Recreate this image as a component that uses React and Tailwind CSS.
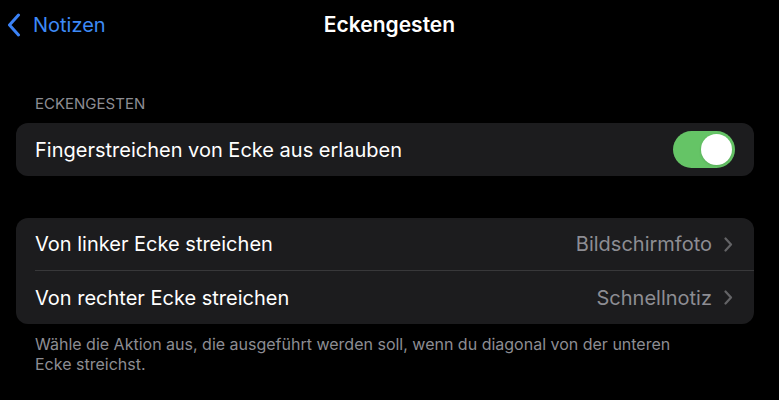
import React from 'react';

const font = { fontFamily: 'Inter, "Noto Sans", sans-serif' };

function Chevron() {
  return (
    <svg width="9" height="15" viewBox="0 0 9 15" fill="none" className="ml-3">
      <path d="M1.5 1.5L7 7.5L1.5 13.5" stroke="#636366" strokeWidth="2.2" strokeLinecap="round" strokeLinejoin="round" />
    </svg>
  );
}

function Toggle() {
  return (
    <div className="w-[62px] h-[37px] rounded-full bg-[#65c466] p-[3px] flex justify-end">
      <div className="w-[31px] h-[31px] rounded-full bg-white shadow" />
    </div>
  );
}

function LinkRow({ label, value, divider }) {
  return (
    <div className="pl-[19px]">
      <div className={`h-[53px] flex items-center pr-[21px] ${divider ? 'border-b border-[#38383a]' : ''}`}>
        <span className="flex-1 text-[20px] text-white">{label}</span>
        <span className="text-[20px] text-[#8d8d93]">{value}</span>
        <Chevron />
      </div>
    </div>
  );
}

export default function App() {
  return (
    <div className="w-[779px] h-[400px] bg-black overflow-hidden" style={font}>
      {/* nav bar */}
      <div className="relative h-[50px] flex items-center justify-center">
        <div className="absolute left-[7px] top-[13px] flex items-center">
          <svg width="14" height="24" viewBox="0 0 14 24" fill="none">
            <path d="M11.5 2L2.5 12L11.5 22" stroke="#3b82f6" strokeWidth="3" strokeLinecap="round" strokeLinejoin="round" />
          </svg>
          <span className="ml-[12px] text-[20px] text-[#3d8af7] leading-none">Notizen</span>
        </div>
        <span className="text-[21px] font-semibold text-white">Eckengesten</span>
      </div>

      <div className="pl-[16px] pr-[25px]">
        <div className="mt-[45px] pl-[19px] text-[15px] leading-[18px] text-[#8d8d93]">ECKENGESTEN</div>
        <div className="mt-[10px] h-[53px] rounded-[12px] bg-[#1c1c1e] flex items-center pl-[19px] pr-[19px]">
          <span className="flex-1 text-[20px] text-white">Fingerstreichen von Ecke aus erlauben</span>
          <Toggle />
        </div>

        <div className="mt-[42px] rounded-[12px] bg-[#1c1c1e]">
          <LinkRow label="Von linker Ecke streichen" value="Bildschirmfoto" divider />
          <LinkRow label="Von rechter Ecke streichen" value="Schnellnotiz" />
        </div>

        <p className="mt-[10px] pl-[19px] w-[690px] text-[16px] leading-[20px] text-[#8d8d93]">
          Wähle die Aktion aus, die ausgeführt werden soll, wenn du diagonal von der unteren Ecke streichst.
        </p>
      </div>
    </div>
  );
}
